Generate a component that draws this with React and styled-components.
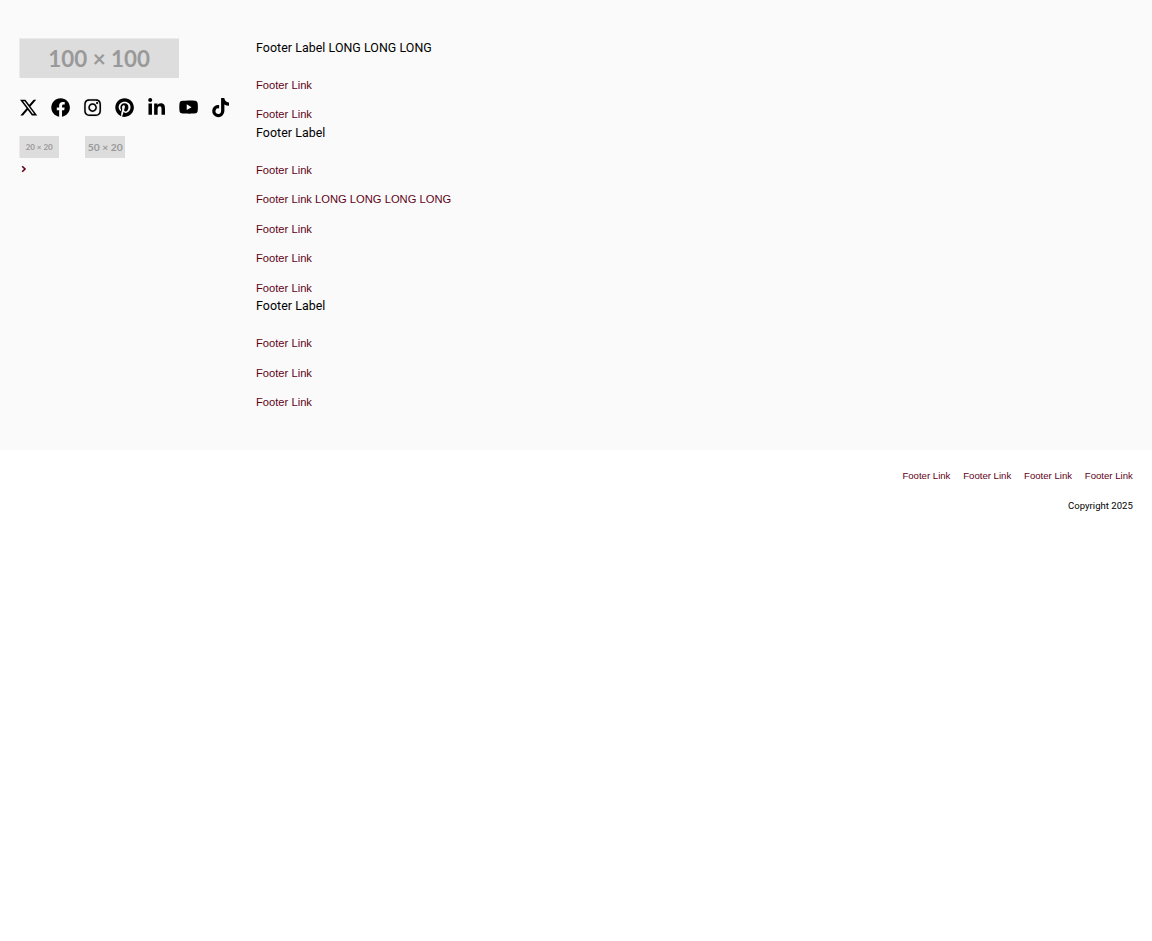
import React from "react";
import styled, { createGlobalStyle } from "styled-components";
import { FaXTwitter, FaLinkedinIn } from "react-icons/fa6";
import { FaFacebook, FaPinterest, FaTiktok, FaInstagram } from "react-icons/fa";
import { BsYoutube } from "react-icons/bs";

const GlobalStyle = createGlobalStyle`
  body { margin: 0; background: #fff; color: #000; font-family: "Liberation Sans", Arial, sans-serif; }
`;
const Main = styled.div`
  display: flex; box-sizing: border-box; height: 450px;
  padding: 38.4px 19.2px; background: #fafafa;
`;
const Brand = styled.div` width: 236.8px; flex: none; `;
const Placeholder = styled.div`
  display: flex; align-items: center; justify-content: center; box-sizing: border-box;
  width: ${(p) => p.$w}px; height: ${(p) => p.$h}px; padding-top: ${(p) => p.$edge || 0}px;
  background: #ddd; color: #999; white-space: nowrap;
  box-shadow: inset ${(p) => p.$left ?? 1}px ${(p) => p.$edge || 0}px 0 #ebebeb;
  font: 700 ${(p) => p.$size}px/1 Lato, sans-serif;
`;
const Socials = styled.div`
  display: flex; gap: 12.8px; margin-top: 19.2px;
  svg { display: block; width: 19.2px; height: 19.2px; overflow: visible; }
`;
const InstagramIcon = styled(FaInstagram)` stroke-width: 4px; `;
const YoutubeIcon = styled(BsYoutube)` box-sizing: border-box; padding: 0.3px; `;
const Badges = styled.div` display: flex; gap: 26px; margin-top: 19.6px; `;
const Arrow = styled.svg` display: block; margin: 7px 0 0 2px; `;
const Columns = styled.div` width: 240px; `;
const Group = styled.section``;
const Label = styled.h2`
  margin: -0.35px 0 19.55px; font: 400 12.4px/19.2px Roboto, sans-serif; letter-spacing: 0.06px;
`;
const List = styled.ul`
  list-style: none; margin: 0; padding: 0; display: grid; gap: 12.8px;
`;
const Link = styled.a`
  display: block; color: #5f0217; font-size: ${(p) => p.$size || 11.2}px; line-height: 16.8px; white-space: nowrap;
`;
const Bottom = styled.div`
  display: flex; flex-direction: column; align-items: flex-end; padding: 18px 19.2px;
`;
const Legal = styled.nav` display: flex; gap: 12.8px; `;
const Copyright = styled.p`
  margin: 12px 0 0; font: 400 9.5px/18px Roboto, sans-serif; letter-spacing: 0.03px;
`;

const groups = [
  ["Footer Label LONG LONG LONG", ["Footer Link", "Footer Link"]],
  ["Footer Label", ["Footer Link", "Footer Link LONG LONG LONG LONG", "Footer Link", "Footer Link", "Footer Link"]],
  ["Footer Label", ["Footer Link", "Footer Link", "Footer Link"]],
];

export default function App() {
  return (
    <footer>
      <GlobalStyle />
      <Main>
        <Brand>
          <Placeholder $w={160} $h={40} $size={22.4} $edge={1}>100 × 100</Placeholder>
          <Socials>
            <FaXTwitter /><FaFacebook /><InstagramIcon /><FaPinterest />
            <FaLinkedinIn /><YoutubeIcon /><FaTiktok />
          </Socials>
          <Badges>
            <Placeholder $w={40} $h={22} $size={8}>20 × 20</Placeholder>
            <Placeholder $w={40} $h={22} $size={10.3} $left={0}>50 × 20</Placeholder>
          </Badges>
          <Arrow width="6" height="8" viewBox="0 0 6 8" fill="none" stroke="#5f0217" strokeWidth="1.6">
            <path d="M1.2 1.2 4 4 1.2 6.8" />
          </Arrow>
        </Brand>
        <Columns>
          {groups.map(([label, links], i) => (
            <Group key={i}>
              <Label>{label}</Label>
              <List>{links.map((l, j) => <li key={j}><Link>{l}</Link></li>)}</List>
            </Group>
          ))}
        </Columns>
      </Main>
      <Bottom>
        <Legal>{[0, 1, 2, 3].map((i) => <Link key={i} $size={9.6}>Footer Link</Link>)}</Legal>
        <Copyright>Copyright 2025</Copyright>
      </Bottom>
    </footer>
  );
}
